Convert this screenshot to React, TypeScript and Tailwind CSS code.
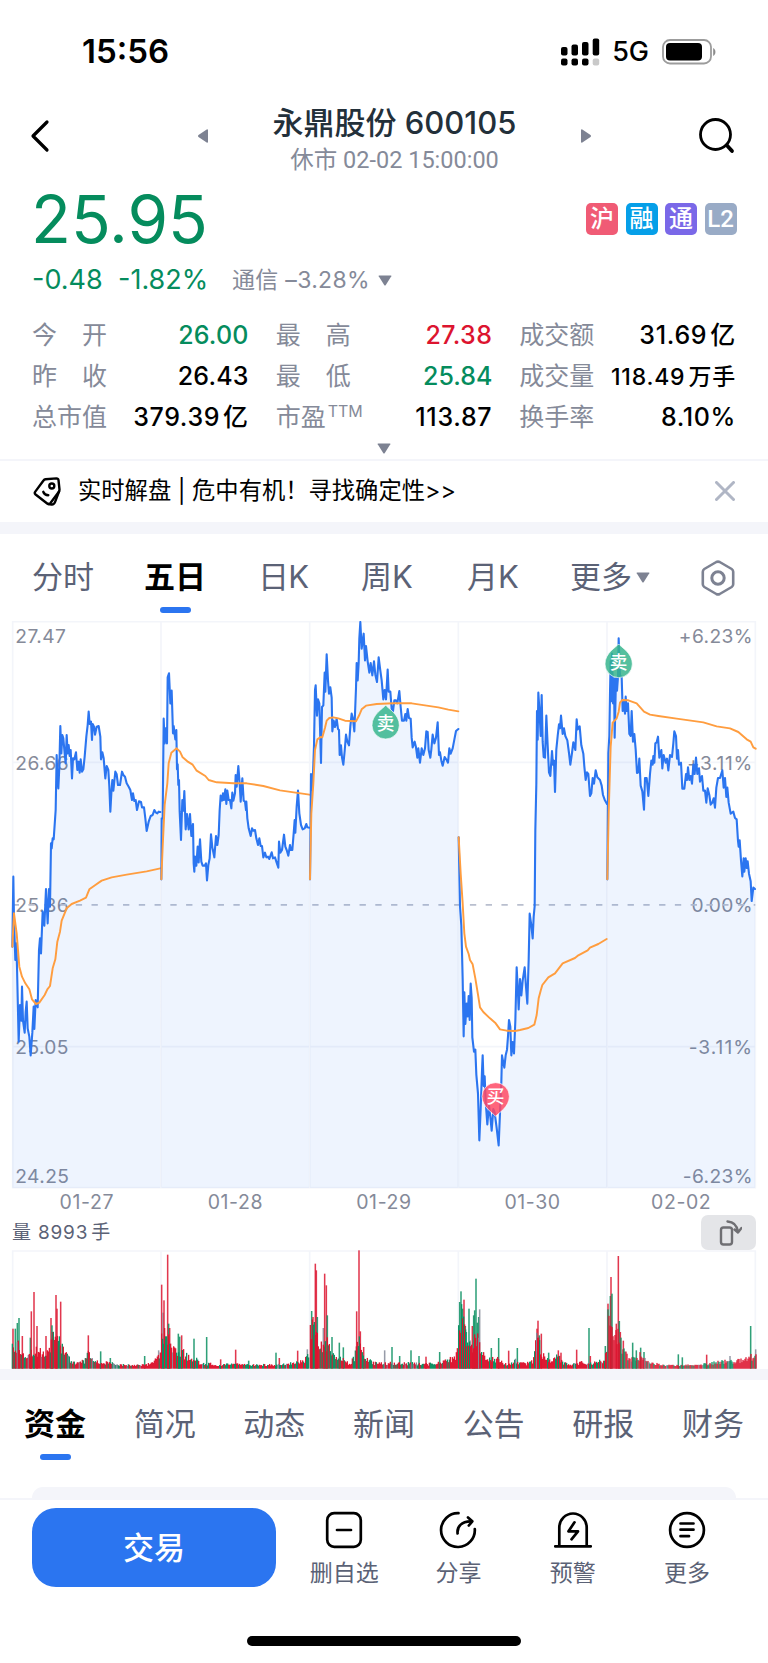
import React from 'react';

type Tone = 'r' | 'g' | 'n';

interface DaySeries {
  label: string;
  price: string;
  average: string;
}

interface DayVolume {
  from: number;
  to: number;
  /** [x, height] pairs, interpolated between */
  base: [number, number][];
  spikes: [number, number, Tone][];
  redShare: number;
}

const TONE_COLOR: Record<Tone, string> = {
  r: '#dc142f',
  g: '#0a8f60',
  n: '#858a99',
};

// Chart units are thirds of a pixel
const CHART_BOTTOM = 1763;
const DAY_EDGES = [38, 483, 929, 1375, 1821, 2266];

const DAYS: DaySeries[] = [
  {
    label: '01-27',
    price:
      '37,1040 40,830 42,960 46,1080 49,1030 51,1100 56,1325 60,1215 64,1262 66,1160 69,1262 74,1298 77,1235 80,1205 83,1285 88,1310 92,1366 97,1298 101,1220 103,1287 107,1200 113,1222 117,1050 120,1015 123,1060 128,935 133,977 138,867 143,970 147,867 150,920 153,730 155,745 158,715 161,718 167,630 170,465 172,530 175,565 178,500 181,378 184,460 187,405 190,415 194,460 197,490 200,405 203,460 206,435 209,468 212,450 216,535 219,475 223,478 228,457 232,510 236,485 239,518 242,478 246,515 250,508 254,470 259,410 263,375 266,335 269,372 273,365 276,420 278,372 282,380 285,404 290,380 296,378 301,410 303,478 307,457 311,475 316,535 320,498 325,510 328,560 331,635 334,580 337,540 340,572 346,515 350,523 354,555 360,555 366,515 370,525 375,530 380,550 386,560 391,570 396,600 399,580 403,603 407,600 411,630 417,604 423,606 426,622 432,622 436,655 440,693 446,665 452,648 458,645 463,630 467,637 472,640 476,635 481,636',
    average:
      '37,1040 42,940 50,1000 58,1100 66,1130 76,1150 88,1168 96,1198 108,1212 118,1208 134,1185 142,1168 150,1158 158,1105 166,1078 172,1025 180,995 185,962 200,925 215,912 240,902 258,893 268,868 285,856 305,842 335,832 380,824 440,814 481,805',
  },
  {
    label: '01-28',
    price:
      '484,838 485,655 488,655 491,356 494,430 497,385 501,430 503,232 507,220 511,310 515,272 519,400 521,378 526,418 529,390 531,508 533,493 535,555 537,540 539,635 543,720 547,600 550,632 553,573 557,688 561,642 566,688 570,642 574,708 579,672 581,790 583,815 585,770 589,797 593,740 596,787 600,718 604,785 608,797 614,797 618,790 621,841 625,795 629,775 633,703 637,742 643,772 648,708 652,735 656,705 659,630 662,587 666,602 669,580 672,600 676,568 679,612 682,572 686,600 690,600 694,625 697,578 700,602 705,580 707,525 710,560 715,498 719,550 722,605 727,535 731,602 735,605 738,630 739,605 742,655 746,685 752,708 756,685 760,692 765,690 769,715 774,735 778,715 782,738 786,738 790,772 795,758 799,772 804,770 808,777 815,757 819,775 825,772 830,788 835,803 837,725 841,758 846,750 852,704 856,740 860,750 865,767 870,735 873,750 877,750 881,700 884,660 886,698 890,620 894,572 898,640 903,675 908,688 914,685 919,672 922,682 928,683',
    average:
      '484,838 488,740 494,615 502,550 506,490 514,458 530,445 540,455 548,472 562,484 578,494 590,512 616,528 626,540 650,547 700,550 740,550 790,558 840,571 928,584',
  },
  {
    label: '01-29',
    price:
      '930,838 933,522 936,570 939,522 942,436 945,270 947,256 951,347 954,298 958,310 963,489 966,321 970,316 974,218 976,275 980,163 984,241 987,281 991,262 995,293 997,394 1001,362 1005,381 1010,356 1014,387 1017,390 1019,465 1023,436 1026,473 1030,494 1034,453 1038,404 1042,425 1047,436 1051,379 1055,341 1059,356 1063,394 1068,264 1070,189 1073,241 1076,189 1078,115 1081,66 1085,146 1091,101 1095,181 1098,138 1103,184 1108,218 1112,189 1117,226 1122,184 1126,224 1131,246 1136,172 1141,212 1145,241 1150,298 1154,270 1158,298 1163,209 1166,275 1171,275 1175,327 1179,333 1183,301 1188,301 1192,310 1198,273 1202,321 1206,362 1212,362 1216,342 1219,362 1223,327 1227,354 1232,356 1235,413 1238,442 1244,425 1248,442 1252,473 1255,445 1260,488 1265,445 1270,465 1275,445 1279,394 1283,396 1286,450 1291,473 1294,448 1298,404 1303,430 1308,413 1313,367 1317,465 1320,457 1324,482 1328,497 1334,471 1340,480 1344,488 1348,445 1352,461 1358,445 1363,419 1368,393 1375,387',
    average:
      '930,838 934,640 940,550 945,450 952,418 962,411 967,412 975,383 980,362 988,354 1000,352 1015,355 1035,362 1068,364 1078,345 1085,328 1098,317 1130,312 1180,310 1235,310 1280,317 1315,322 1345,329 1375,334',
  },
  {
    label: '01-30',
    price:
      '1376,712 1380,918 1384,976 1388,1137 1391,1309 1393,1177 1396,1272 1400,1211 1403,1249 1406,1188 1409,1260 1412,1151 1415,1194 1417,1312 1422,1355 1426,1349 1429,1424 1434,1481 1438,1621 1442,1527 1446,1412 1448,1366 1451,1458 1454,1429 1457,1504 1462,1573 1467,1515 1471,1550 1475,1592 1480,1527 1484,1538 1490,1584 1496,1636 1500,1538 1504,1446 1506,1366 1509,1383 1513,1403 1517,1366 1521,1349 1524,1309 1527,1260 1531,1280 1534,1366 1538,1326 1542,1360 1546,1263 1550,1102 1554,1182 1556,1228 1560,1137 1564,1186 1568,1142 1574,1102 1578,1160 1582,1211 1586,1079 1589,941 1594,976 1598,1015 1601,950 1604,918 1606,689 1609,551 1611,333 1613,419 1615,278 1619,344 1622,408 1625,285 1628,425 1631,471 1635,473 1639,347 1643,436 1647,517 1651,528 1656,453 1659,494 1662,482 1665,576 1669,448 1673,408 1677,373 1680,385 1683,347 1688,402 1692,385 1696,408 1702,421 1707,459 1711,494 1716,459 1720,427 1726,450 1730,358 1733,388 1739,379 1744,436 1750,461 1753,499 1757,540 1761,517 1765,522 1770,588 1774,580 1778,534 1782,551 1787,511 1792,532 1800,540 1805,557 1809,585 1814,599 1821,612',
    average:
      '1376,712 1382,820 1388,910 1393,1000 1398,1040 1406,1062 1410,1080 1418,1093 1426,1135 1434,1184 1440,1222 1450,1236 1470,1255 1487,1270 1500,1288 1520,1292 1545,1293 1560,1290 1585,1284 1603,1274 1610,1245 1616,1195 1622,1172 1627,1155 1645,1132 1665,1120 1688,1090 1725,1074 1735,1066 1763,1051 1770,1043 1795,1032 1820,1017',
  },
  {
    label: '02-02',
    price:
      '1822,838 1825,459 1828,408 1830,281 1832,184 1833,304 1836,161 1839,310 1842,235 1844,413 1848,235 1851,272 1854,230 1856,115 1860,230 1865,230 1868,333 1872,304 1875,341 1877,290 1880,333 1884,310 1888,402 1892,408 1895,333 1899,425 1903,402 1907,448 1911,519 1915,517 1918,476 1922,557 1927,574 1932,629 1935,534 1940,534 1945,588 1950,522 1954,482 1958,494 1960,468 1963,488 1966,430 1970,427 1974,410 1978,473 1984,450 1987,505 1991,465 1997,488 2001,476 2005,511 2010,465 2016,471 2020,430 2023,394 2028,408 2031,476 2034,450 2037,494 2043,488 2047,566 2053,566 2058,522 2061,540 2064,502 2068,540 2072,528 2076,551 2080,494 2084,522 2088,473 2092,522 2097,505 2100,545 2106,528 2110,572 2115,572 2119,608 2123,565 2128,585 2132,614 2137,608 2141,595 2145,623 2149,563 2154,534 2160,534 2167,511 2171,563 2175,534 2179,591 2182,563 2186,608 2192,641 2200,635 2205,654 2210,658 2214,723 2216,740 2219,721 2223,781 2227,829 2231,775 2233,815 2237,775 2240,804 2243,784 2247,821 2252,844 2255,903 2260,863 2265,867',
    average:
      '1822,838 1826,640 1832,440 1838,368 1850,355 1856,335 1860,308 1867,300 1885,301 1910,310 1932,335 1950,344 1975,348 2030,356 2110,367 2150,379 2190,385 2215,396 2240,418 2252,425 2260,442 2267,446',
  },
];

const VOLUMES: DayVolume[] = [
  {
    from: 37, to: 481, redShare: 0.7,
    base: [[37, 65], [55, 75], [75, 50], [85, 50], [100, 55], [130, 60], [145, 50], [155, 100], [170, 90], [185, 75], [200, 55], [210, 25], [230, 18], [255, 25], [265, 60], [275, 30], [300, 18], [330, 20], [345, 12], [430, 12], [450, 15], [470, 30], [481, 45]],
    spikes: [[39, 120, 'r'], [46, 120, 'g'], [52, 137, 'g'], [57, 152, 'g'], [67, 98, 'r'], [91, 93, 'g'], [94, 172, 'r'], [102, 230, 'r'], [111, 128, 'r'], [138, 98, 'r'], [153, 152, 'r'], [156, 130, 'g'], [158, 110, 'r'], [168, 221, 'r'], [171, 180, 'r'], [182, 201, 'r'], [265, 100, 'r'], [302, 52, 'g'], [331, 32, 'g'], [434, 38, 'g'], [476, 55, 'n']],
  },
  {
    from: 485, to: 926, redShare: 0.55,
    base: [[485, 100], [495, 105], [510, 90], [520, 60], [535, 60], [550, 50], [565, 35], [590, 30], [600, 15], [640, 15], [650, 8], [690, 15], [740, 12], [830, 12], [880, 20], [900, 25], [910, 20], [926, 50]],
    spikes: [[485, 252, 'r'], [489, 168, 'n'], [492, 205, 'r'], [503, 342, 'r'], [506, 135, 'g'], [509, 122, 'r'], [535, 105, 'g'], [539, 96, 'g'], [545, 100, 'r'], [582, 90, 'g'], [620, 95, 'g'], [662, 28, 'r'], [707, 57, 'r'], [746, 24, 'g'], [828, 48, 'g'], [838, 32, 'r'], [893, 54, 'r'], [922, 58, 'n']],
  },
  {
    from: 931, to: 1374, redShare: 0.55,
    base: [[931, 120], [945, 150], [955, 90], [965, 70], [975, 90], [985, 80], [1000, 40], [1020, 35], [1035, 25], [1050, 15], [1065, 40], [1075, 110], [1085, 60], [1095, 35], [1120, 18], [1175, 18], [1300, 15], [1320, 20], [1345, 25], [1365, 40], [1374, 60]],
    spikes: [[935, 173, 'g'], [939, 155, 'r'], [946, 315, 'r'], [949, 295, 'r'], [952, 155, 'g'], [970, 122, 'n'], [974, 285, 'r'], [979, 250, 'r'], [982, 160, 'g'], [996, 95, 'g'], [1018, 78, 'g'], [1030, 64, 'g'], [1070, 172, 'r'], [1077, 355, 'r'], [1081, 112, 'r'], [1091, 65, 'r'], [1154, 55, 'n'], [1176, 65, 'g'], [1199, 38, 'g'], [1233, 55, 'g'], [1257, 38, 'g'], [1278, 36, 'r'], [1319, 50, 'g']],
  },
  {
    from: 1376, to: 1820, redShare: 0.7,
    base: [[1376, 130], [1385, 170], [1392, 130], [1400, 80], [1415, 60], [1425, 120], [1435, 100], [1440, 60], [1450, 45], [1460, 30], [1500, 30], [1515, 15], [1530, 15], [1545, 30], [1555, 20], [1580, 15], [1590, 25], [1598, 20], [1605, 70], [1614, 110], [1622, 60], [1630, 45], [1650, 25], [1675, 40], [1690, 20], [1710, 12], [1750, 20], [1765, 15], [1810, 25], [1820, 55]],
    spikes: [[1379, 200, 'g'], [1383, 232, 'g'], [1388, 180, 'g'], [1392, 207, 'r'], [1396, 128, 'g'], [1399, 110, 'g'], [1407, 180, 'g'], [1410, 85, 'n'], [1417, 128, 'r'], [1421, 160, 'g'], [1424, 175, 'g'], [1428, 270, 'g'], [1432, 138, 'g'], [1436, 155, 'g'], [1439, 178, 'n'], [1474, 62, 'g'], [1496, 92, 'g'], [1526, 54, 'r'], [1552, 62, 'g'], [1611, 120, 'r'], [1614, 144, 'r'], [1618, 100, 'g'], [1624, 105, 'r'], [1646, 48, 'g'], [1675, 55, 'r'], [1683, 48, 'r'], [1730, 57, 'r'], [1767, 122, 'g'], [1771, 38, 'r'], [1816, 68, 'g']],
  },
  {
    from: 1824, to: 2268, redShare: 0.55,
    base: [[1824, 150], [1834, 160], [1840, 100], [1850, 110], [1856, 130], [1865, 70], [1880, 40], [1895, 30], [1910, 35], [1925, 45], [1940, 20], [1970, 15], [2000, 10], [2040, 10], [2100, 12], [2150, 20], [2200, 25], [2240, 30], [2268, 45]],
    spikes: [[1824, 195, 'r'], [1831, 218, 'g'], [1833, 275, 'r'], [1836, 225, 'g'], [1849, 135, 'r'], [1855, 338, 'r'], [1858, 143, 'g'], [1861, 110, 'r'], [1870, 84, 'r'], [1898, 78, 'g'], [1909, 55, 'g'], [1922, 63, 'g'], [1932, 50, 'g'], [2035, 43, 'g'], [2047, 34, 'g'], [2120, 42, 'r'], [2190, 38, 'n'], [2252, 128, 'g'], [2267, 58, 'n']],
  },
];

const STATS: { label: string; sup?: string; value: string; unit?: string; style: string }[] = [
  { label: '今　开', value: '26.00', style: 'text-[25px] tracking-[0.2px] text-[#058c5d]' },
  { label: '最　高', value: '27.38', style: 'text-[25px] tracking-[0.4px] text-[#dc142f]' },
  { label: '成交额', value: '31.69', unit: '亿', style: 'text-[25px] tracking-[0.7px] text-black' },
  { label: '昨　收', value: '26.43', style: 'text-[25px] tracking-[0.2px] text-black' },
  { label: '最　低', value: '25.84', style: 'text-[25px] text-[#058c5d]' },
  { label: '成交量', value: '118.49', unit: '万手', style: 'text-[23px] tracking-[0.8px] text-black' },
  { label: '总市值', value: '379.39', unit: '亿', style: 'text-[25px] tracking-[0.6px] text-black' },
  { label: '市盈', sup: 'TTM', value: '113.87', style: 'text-[25px] tracking-[0.7px] text-black' },
  { label: '换手率', value: '8.10%', style: 'text-[25px] tracking-[0.6px] text-black' },
];

const BADGES = [
  { text: '沪', style: 'bg-[#f05b75]' },
  { text: '融', style: 'bg-[#069fe8]' },
  { text: '通', style: 'bg-[#7a68e8]' },
  { text: 'L2', style: 'bg-[#99abc6] font-[Roboto,sans-serif]' },
];

const INFO_TABS = ['资金', '简况', '动态', '新闻', '公告', '研报', '财务'];

function interpolate(points: [number, number][], x: number): number {
  for (let i = 1; i < points.length; i++) {
    const [x0, y0] = points[i - 1];
    const [x1, y1] = points[i];
    if (x <= x1) return y0 + ((y1 - y0) * (x - x0)) / (x1 - x0);
  }
  return points[points.length - 1][1];
}

function noise(n: number): number {
  const v = Math.sin(n * 12.9898) * 43758.5453;
  return v - Math.floor(v);
}

function volumeBars(day: DayVolume) {
  const bars: { x: number; h: number; tone: Tone }[] = [];
  for (let x = day.from; x <= day.to; x += 3) {
    const h = interpolate(day.base, x) * (0.6 + noise(x) * 0.6);
    const pick = noise(x + 7.3);
    const tone: Tone = pick < day.redShare ? 'r' : pick < 0.95 ? 'g' : 'n';
    bars.push({ x, h: Math.max(h, 8), tone });
  }
  return bars;
}

function Caret({ className }: { className: string }) {
  return (
    <svg className={className} viewBox="0 0 14 11" fill="#7d8292">
      <path d="M1.2 .4h11.6q1 0 .5.9L7.8 10q-.8 1-1.6 0L.7 1.3Q.2.4 1.2.4z" />
    </svg>
  );
}

function StatusBar() {
  return (
    <div className="flex h-[104px] items-center justify-between pl-[82px] pr-[51px]">
      <span className="text-[33px] font-semibold text-black">15:56</span>
      <div className="flex items-center">
        <svg className="h-[28px] w-[39px]" viewBox="0 0 39 28">
          <rect x="0" y="9" width="6.5" height="8.5" rx="2" />
          <rect x="10.5" y="6.5" width="6.5" height="11" rx="2" />
          <rect x="21" y="4" width="6.5" height="13.5" rx="2" />
          <rect x="31.7" y="0.5" width="6.5" height="17" rx="2" />
          <rect x="0" y="20.5" width="6.5" height="7" rx="2" />
          <rect x="10.5" y="20.5" width="6.5" height="7" rx="2" />
          <rect x="21" y="20.5" width="6.5" height="7" rx="2" />
          <rect x="31.7" y="20.5" width="6.5" height="7" rx="2" fill="#c9c9c9" />
        </svg>
        <span className="ml-[12px] text-[27px] font-medium text-black">5G</span>
        <svg className="ml-[13px] h-[26px] w-[55px]" viewBox="0 0 55 26">
          <rect x="1" y="1" width="48" height="23.5" rx="7" fill="none" stroke="#9c9c9c" strokeWidth="1.8" />
          <rect x="4" y="4" width="36" height="17.5" rx="4" />
          <path d="M51.2 9c3 1.5 3 6.5 0 8z" fill="#8c8c8c" />
        </svg>
      </div>
    </div>
  );
}

function Header() {
  return (
    <header className="flex h-[80px] items-start pl-[30px]">
      <svg className="mt-[15px] h-[34px] w-[20px]" viewBox="0 0 20 34" fill="none" stroke="#000" strokeWidth="3.2" strokeLinecap="round" strokeLinejoin="round">
        <path d="M17 3L3 17l14 14" />
      </svg>
      <div className="ml-[148px] flex w-[393px] items-start justify-between">
        <svg className="mt-[25px] h-[14px] w-[10px]" viewBox="0 0 10 14" fill="#7d8292">
          <path d="M10 1v12q-.3 1.2-1.3.5L.5 8q-1-1 0-2L8.7.5Q9.7-.2 10 1z" />
        </svg>
        <div className="flex flex-col items-center">
          <h1 className="text-[31px] leading-[38px] font-medium text-[#23303a]">永鼎股份 600105</h1>
          <p className="font-[Roboto,'Noto_Sans_CJK_SC',sans-serif] text-[23.5px] leading-[37px] text-[#858a99]">休市 02-02 15:00:00</p>
        </div>
        <svg className="mt-[25px] h-[14px] w-[10px]" viewBox="0 0 10 14" fill="#7d8292">
          <path d="M0 1v12q.3 1.2 1.3.5L9.5 8q1-1 0-2L1.3.5Q.3-.2 0 1z" />
        </svg>
      </div>
      <svg className="mt-[14px] ml-[108px] h-[36px] w-[36px]" viewBox="0 0 36 36" fill="none" stroke="#000" strokeLinecap="round">
        <circle cx="16.5" cy="16.5" r="15" strokeWidth="2.8" />
        <path d="M28 27.5l5 5.5" strokeWidth="3.8" />
      </svg>
    </header>
  );
}

function Quote() {
  return (
    <section>
      <div className="flex h-[72px] items-center justify-between pl-[31px] pr-[31.5px]">
        <span className="text-[65.5px] leading-[72px] text-[#058c5d]">25.95</span>
        <div className="flex gap-[7.5px] pb-[2px]">
          {BADGES.map((b) => (
            <span key={b.text} className={`flex h-8 w-8 items-center justify-center rounded-[5px] text-[24px] leading-none font-medium text-white ${b.style}`}>
              {b.text}
            </span>
          ))}
        </div>
      </div>
      <div className="flex h-[48px] items-center pl-[32px] text-[#058c5d]">
        <span className="w-[86px] text-[27px]">-0.48</span>
        <span className="w-[114px] text-[27px]">-1.82%</span>
        <span className="text-[23px] tracking-[0.3px] text-[#858a99]">通信 –3.28%</span>
        <Caret className="ml-[8px] h-[11px] w-[14px]" />
      </div>
      <dl className="mt-[11px] grid grid-cols-3 gap-x-[27px] px-[32px]">
        {STATS.map((s) => (
          <div key={s.label} className="flex h-[41.3px] items-center justify-between whitespace-nowrap">
            <dt className="text-[25px] text-[#858a99]">
              {s.label}
              {s.sup && <sup className="top-[-9px] ml-[2px] text-[16px]">{s.sup}</sup>}
            </dt>
            <dd className={`flex items-center gap-[3px] font-medium ${s.style}`}>
              <span>{s.value}</span>
              {s.unit && <span>{s.unit}</span>}
            </dd>
          </div>
        ))}
      </dl>
      <div className="flex h-[20px] justify-center pt-[4px]">
        <Caret className="h-[11px] w-[14px]" />
      </div>
    </section>
  );
}

function Notice() {
  return (
    <div className="flex h-[63px] items-center border-t-2 border-[#f4f5fa] pl-[33px] pr-[33.5px]">
      <svg className="h-[29px] w-[28px]" viewBox="0 0 28 29" fill="none" stroke="#000" strokeWidth="2.4" strokeLinecap="round" strokeLinejoin="round">
        <path d="M12.5 2.2l11-.8q1.7 0 2 1.7l1 9.500q0 1.2-.6 2.2l-8.6 11.4q-1.2 1.500-2.8.5L2.6 17.500q-1.500-1.3-.3-2.9L10.500 3.500q.8-1.2 2-1.300z" />
        <path d="M26 14.500l-4 10.700q-1 2.600-3.500 2.300l-3-.5" />
        <circle cx="18.800" cy="9" r="2.500" />
        <path d="M10.300 14.800q1 3.200 5 3.400" />
      </svg>
      <p className="ml-[17px] flex-1 text-[23.3px] text-black">实时解盘 | 危中有机！寻找确定性&gt;&gt;</p>
      <svg className="mb-[1px] h-5 w-5" viewBox="0 0 20 20" stroke="#b0b6c5" strokeWidth="3" strokeLinecap="round">
        <path d="M1.5 1.5l17 17M18.5 1.5l-17 17" />
      </svg>
    </div>
  );
}

function PeriodTabs() {
  return (
    <nav className="flex h-[87px] text-[31px] text-[#5b6276]">
      <span className="w-[112px] pt-[20px] pl-[32px]">分时</span>
      <span className="flex w-[126px] flex-col items-center pt-[20px] font-bold text-black">
        五日
        <i className="mt-[7px] block h-[6px] w-[31px] rounded-[3px] bg-[#2b75f0]" />
      </span>
      <span className="w-[103px] pt-[20px] pl-[20px] tracking-[-0.7px]">日K</span>
      <span className="w-[107px] pt-[20px] pl-[20px]">周K</span>
      <span className="w-[103px] pt-[20px] pl-[19px]">月K</span>
      <span className="flex w-[150px] pt-[20px] pl-[19px]">
        更多
        <Caret className="mt-[18px] ml-[4px] h-[11px] w-[14px]" />
      </span>
      <svg className="mt-[26px] h-[36px] w-[34px]" viewBox="0 0 34 36" fill="none" stroke="#7d8292" strokeLinejoin="round">
        <path d="M15.3 2q1.7-.8 3.4 0l12 7q1.5 1 1.5 2.7v12.6q0 1.7-1.5 2.7l-12 7q-1.7.8-3.4 0l-12-7q-1.5-1-1.5-2.7V11.7q0-1.7 1.5-2.7z" strokeWidth="2.6" />
        <circle cx="17" cy="18" r="6.2" strokeWidth="3" />
      </svg>
    </nav>
  );
}

interface MarkerProps {
  x: number;
  y: number;
  kind: 'buy' | 'sell';
}

function TradeMarker({ x, y, kind }: MarkerProps) {
  const sell = kind === 'sell';
  return (
    <g transform={`translate(${x} ${y})`}>
      <path
        d="M0-57C8-47 41-30 41 3A41 41 0 0 1-41 3C-41-30-8-47 0-57z"
        transform={sell ? undefined : 'scale(1 -1)'}
        fill={sell ? '#35b48c' : '#ff4763'}
        fillOpacity="0.84"
        stroke="#fff"
        strokeWidth="2"
      />
      <text x="0" y="18" textAnchor="middle" fontSize="53" fontWeight="500" fill="#fff">
        {sell ? '卖' : '买'}
      </text>
    </g>
  );
}

function PriceChart() {
  return (
    <svg className="block h-[568px] w-full" viewBox="0 63 2304 1704">
      <g stroke="#f3f5fa" strokeWidth="5">
        <rect x="38" y="65" width="2228" height="1698" fill="none" />
        {DAY_EDGES.slice(1, 5).map((x) => (
          <line key={x} x1={x} x2={x} y1="65" y2={CHART_BOTTOM} />
        ))}
        <line x1="38" x2="2266" y1="487" y2="487" />
        <line x1="38" x2="2266" y1="1340" y2="1340" />
      </g>
      <g fontSize="57.5" letterSpacing="1.2" fill="#858a99">
        <text x="46" y="129">27.47</text>
        <text x="46" y="509">26.66</text>
        <text x="46" y="935">25.86</text>
        <text x="46" y="1362">25.05</text>
        <text x="46" y="1748">24.25</text>
        <g textAnchor="end">
          <text x="2259" y="129">+6.23%</text>
          <text x="2259" y="509" letterSpacing="2">+3.11%</text>
          <text x="2259" y="935">0.00%</text>
          <text x="2259" y="1362" letterSpacing="3">-3.11%</text>
          <text x="2259" y="1748">-6.23%</text>
        </g>
      </g>
      <line x1="38" x2="2266" y1="914.5" y2="914.5" stroke="#b9bfce" strokeWidth="5.5" strokeDasharray="19 28.3" />
      {DAYS.map((day) => {
        const points = day.price.split(' ');
        const startX = points[0].split(',')[0];
        const endX = points[points.length - 1].split(',')[0];
        return (
          <g key={day.label} fill="none" strokeLinejoin="round" strokeLinecap="round">
            <polygon points={`${startX},${CHART_BOTTOM} ${day.price} ${endX},${CHART_BOTTOM}`} fill="#2b75f0" fillOpacity="0.08" />
            <polyline points={day.price} stroke="#2b75f0" strokeWidth="6.3" />
            <polyline points={day.average} stroke="#ff9d3f" strokeWidth="5.8" />
          </g>
        );
      })}
      <TradeMarker x={1157} y={373} kind="sell" />
      <TradeMarker x={1487} y={1492} kind="buy" />
      <TradeMarker x={1856} y={189} kind="sell" />
    </svg>
  );
}

function VolumeChart() {
  const bottom = 596;
  return (
    <svg className="block h-[119px] w-full" viewBox="0 240 2304 357">
      <g stroke="#f3f5fa" strokeWidth="5" fill="none">
        <path d="M38 597V243H2266V597" />
        {DAY_EDGES.slice(1, 5).map((x) => (
          <line key={x} x1={x} x2={x} y1="243" y2="597" />
        ))}
      </g>
      {VOLUMES.map((day) => (
        <g key={day.from}>
          {day.spikes.map(([x, h, tone]) => (
            <rect key={x} x={x - 2.3} y={bottom - h} width="4.6" height={h} fill={TONE_COLOR[tone]} fillOpacity="0.85" />
          ))}
          {volumeBars(day).map((b) => (
            <rect key={b.x} x={b.x - 1.9} y={bottom - b.h} width="3.8" height={b.h} fill={TONE_COLOR[b.tone]} />
          ))}
        </g>
      ))}
    </svg>
  );
}

function InfoTabs() {
  return (
    <nav className="flex h-[107px] justify-between px-[24px] pt-[21px] text-[31px] text-[#5b6276]">
      {INFO_TABS.map((t, i) => (
        <span key={t} className={`flex flex-col items-center ${i === 0 ? 'font-bold text-black' : ''}`}>
          {t}
          {i === 0 && <i className="mt-[7px] block h-[6px] w-[31px] rounded-[3px] bg-[#2b75f0]" />}
        </span>
      ))}
    </nav>
  );
}

function BottomBar() {
  const items = [
    {
      label: '删自选',
      icon: (
        <>
          <rect x="2.2" y="2.2" width="33.6" height="33.6" rx="7" />
          <path d="M12 19h14" />
        </>
      ),
    },
    {
      label: '分享',
      icon: (
        <>
          <path d="M19.5 2.2A16.9 16.9 0 1 0 35.8 18" />
          <path d="M18.6 22.5c-.8-7 4-12 13-12.2" />
          <path d="M29 6.5l4.3 3.8-3.5 4.2" />
        </>
      ),
    },
    {
      label: '预警',
      icon: (
        <>
          <path d="M5.3 35V16.5a13.7 14 0 0 1 27.4 0V35M1.2 35.3h35.6" />
          <path d="M20.5 11.3l-6 9h9.5l-6.5 8" />
        </>
      ),
    },
    {
      label: '更多',
      icon: (
        <>
          <circle cx="19" cy="19" r="16.9" />
          <path d="M12.5 12.5h13M12.5 18.7h13M12.5 25.2h8.5" />
        </>
      ),
    },
  ];

  return (
    <footer className="flex h-[165px] border-t-2 border-[#f4f5fa] bg-white pt-[8px] pl-[32px]">
      <button className="h-[79px] w-[244px] rounded-[24px] bg-[#2b75f0] pt-[2px] text-[31px] font-medium text-white">交易</button>
      <div className="ml-[11px] flex">
        {items.map((item) => (
          <div key={item.label} className="flex w-[114.3px] flex-col items-center pt-[3px]">
            <svg className="h-[38px] w-[38px]" viewBox="0 0 38 38" fill="none" stroke="#000" strokeWidth="2.7" strokeLinecap="round" strokeLinejoin="round">
              {item.icon}
            </svg>
            <span className="mt-[7px] text-[23px] leading-[34px] text-[#5b6276]">{item.label}</span>
          </div>
        ))}
      </div>
    </footer>
  );
}

export default function App() {
  return (
    <div className="relative h-[1663px] w-[768px] overflow-hidden bg-white font-[Inter,'Noto_Sans_CJK_SC',sans-serif]">
      <StatusBar />
      <Header />
      <Quote />
      <Notice />
      <div className="h-[12px] bg-[#f4f5fa]" />
      <PeriodTabs />
      <PriceChart />
      <div className="flex h-[27px] items-center px-[12.5px] text-[19.5px] tracking-[0.6px] text-[#858a99]">
        {DAYS.map((d) => (
          <span key={d.label} className="flex-1 text-center">{d.label}</span>
        ))}
      </div>
      <div className="flex h-[34px] items-center justify-between pr-[12px] pl-[12px]">
        <span className="text-[19px] tracking-[0.8px] text-[#5b6276]">
          量 8993<span className="ml-[3px]">手</span>
        </span>
        <button className="flex h-[35px] w-[55px] items-center justify-center rounded-[7px] bg-[#e4e5e8]">
          <svg className="h-[28px] w-[26px]" viewBox="0 0 26 28" fill="none" stroke="#6f6f73" strokeWidth="2.4" strokeLinecap="round" strokeLinejoin="round">
            <rect x="5" y="8.500" width="11" height="17" rx="2.500" />
            <path d="M11.500 2.500c6 .3 9.500 3.500 10.500 10.500M18.500 10.500l3.500 3 3.500-4.500" />
          </svg>
        </button>
      </div>
      <VolumeChart />
      <div className="h-[11px] bg-[#f4f5fa]" />
      <InfoTabs />
      <div className="mx-[32px] h-[11px] rounded-t-[14px] bg-[#f4f5fa]" />
      <BottomBar />
      <div className="absolute bottom-[17px] left-[247px] h-[10px] w-[274px] rounded-full bg-black" />
    </div>
  );
}
